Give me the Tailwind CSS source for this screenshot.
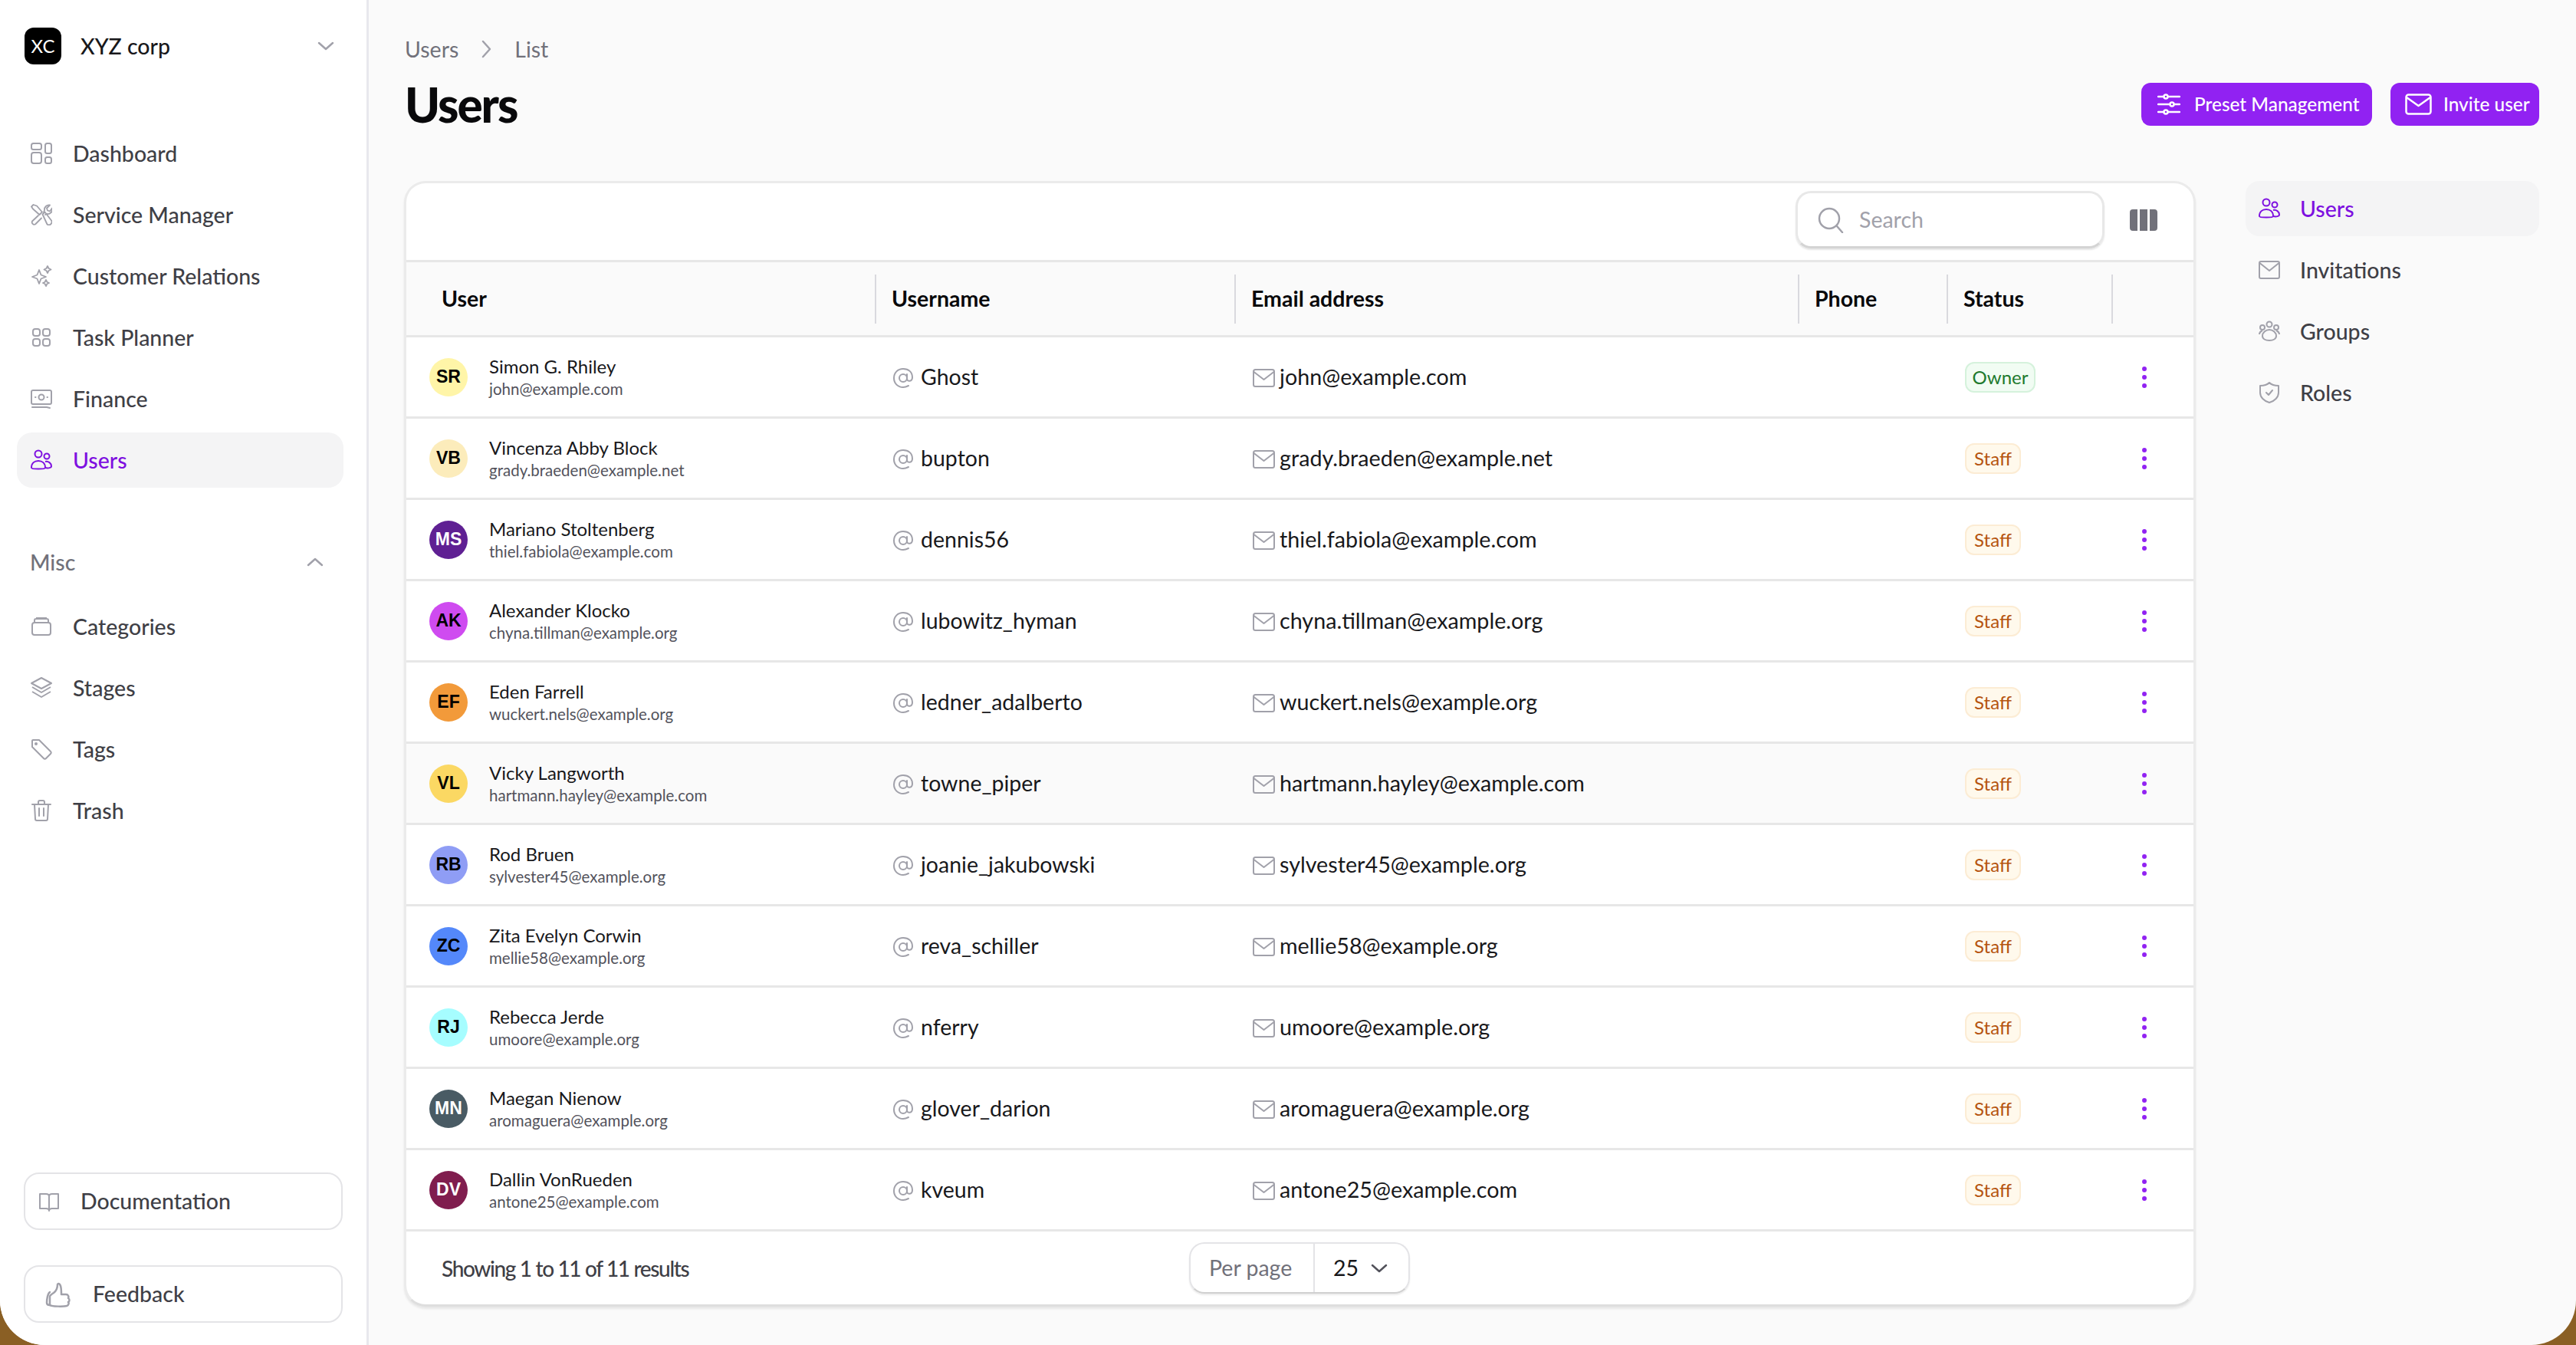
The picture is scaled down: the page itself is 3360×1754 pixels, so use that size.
<!DOCTYPE html>
<html>
<head>
<meta charset="UTF-8">
<title>Users</title>
<script src="https://cdn.jsdelivr.net/npm/@tailwindcss/browser@4"></script>
</head>
<body class="bg-[#8a5f24] font-['Lato',sans-serif]">
<div class="flex w-[3360px] h-[1754px] overflow-hidden rounded-b-[58px] bg-[#fafafa]">

  <!-- Sidebar -->
  <aside class="flex flex-col w-[481px] h-full shrink-0 bg-white border-r-[3px] border-[#e8e8ed] text-[28.5px] text-[#3f3f46] font-medium">
    <div class="flex items-center h-[48px] mt-[36px] ml-[32px] mr-[42px]">
      <div class="flex items-center justify-center w-[48px] h-[48px] rounded-[12px] bg-black text-white text-[24px] font-normal">XC</div>
      <span class="ml-[25px] text-[#18181b]">XYZ corp</span>
      <svg class="ml-auto w-[22px] h-[12px]" viewBox="0 0 22 12" fill="none" stroke="#a1a1aa" stroke-width="2.5" stroke-linecap="round" stroke-linejoin="round"><path d="M2 2l9 8 9-8"/></svg>
    </div>

    <nav class="flex flex-col gap-[8px] mt-[80px] ml-[22px] mr-[30px]">
      <a class="flex items-center gap-[27px] h-[72px] pl-[18px]">
        <svg class="w-[28px] h-[28px]" viewBox="0 0 28 28" fill="none" stroke="#a1a1aa" stroke-width="2"><rect x="1" y="1" width="13" height="8" rx="2.5"/><rect x="1" y="13" width="13" height="14" rx="3"/><rect x="19" y="1" width="8" height="13" rx="2.5"/><rect x="19" y="19" width="8" height="8" rx="2.5"/></svg>
        Dashboard
      </a>
      <a class="flex items-center gap-[27px] h-[72px] pl-[18px]">
        <svg class="w-[28px] h-[28px]" viewBox="0 0 28 28" fill="none" stroke="#a1a1aa" stroke-width="1.8" stroke-linecap="round" stroke-linejoin="round"><path d="M1 3.500L3.500 1 8 2.500 15 10.500 11.500 14 3 6.500z"/><path d="M15.500 13.500L18.500 10.500 27 21.500a3.800 3.800 0 0 1-5.500 5z"/><path d="M10 15L2 22.500a3 3 0 0 0 4 4L14 18.500"/><path d="M17 11l1-3a6 6 0 0 1 7-6.500l-4 4 1 3 3 1 3-4a6 6 0 0 1-7 7.500l-2 1"/></svg>
        Service Manager
      </a>
      <a class="flex items-center gap-[27px] h-[72px] pl-[18px]">
        <svg class="w-[28px] h-[28px]" viewBox="0 0 28 28" fill="none" stroke="#a1a1aa" stroke-width="1.8" stroke-linejoin="round"><path d="M11 6l2.500 6.500L20 15l-6.500 2.500L11 24l-2.500-6.500L2 15l6.500-2.500z"/><path d="M22 1l1.500 3 3 1.500-3 1.500-1.500 3-1.500-3-3-1.500 3-1.500z"/><path d="M20 19l1.300 2.700 2.700 1.300-2.700 1.300-1.300 2.700-1.300-2.700-2.700-1.300 2.700-1.300z"/></svg>
        Customer Relations
      </a>
      <a class="flex items-center gap-[27px] h-[72px] pl-[18px]">
        <svg class="w-[28px] h-[28px]" viewBox="0 0 28 28" fill="none" stroke="#a1a1aa" stroke-width="2"><rect x="3" y="3" width="9" height="9" rx="3"/><rect x="16" y="3" width="9" height="9" rx="3"/><rect x="3" y="16" width="9" height="9" rx="3"/><rect x="16" y="16" width="9" height="9" rx="3"/></svg>
        Task Planner
      </a>
      <a class="flex items-center gap-[27px] h-[72px] pl-[18px]">
        <svg class="w-[28px] h-[28px]" viewBox="0 0 28 28" fill="none" stroke="#a1a1aa" stroke-width="2" stroke-linecap="round"><rect x="1" y="3" width="26" height="18" rx="2"/><circle cx="14" cy="12" r="3.500"/><path d="M6 12h.5M21.500 12h.5M2 25h19l4 1"/></svg>
        Finance
      </a>
      <a class="flex items-center gap-[27px] h-[72px] pl-[18px] rounded-[20px] bg-[#f4f4f5] text-[#7e10e0]">
        <svg class="w-[28px] h-[28px]" viewBox="0 0 28 28" fill="none" stroke="#7e10e0" stroke-width="2"><circle cx="10" cy="6" r="4.500"/><circle cx="21" cy="9" r="3.500"/><path d="M1 24c0-6 4-9 9-9s9 3 9 9c0 2-18 2-18 0z"/><path d="M19 16c4-1 8 2 8 6 0 2-4 3-8 2"/></svg>
        Users
      </a>
    </nav>

    <div class="flex items-center justify-between h-[72px] mt-[61px] ml-[39px] mr-[56px] text-[#71717a]">
      Misc
      <svg class="w-[22px] h-[12px]" viewBox="0 0 22 12" fill="none" stroke="#a1a1aa" stroke-width="2.500" stroke-linecap="round" stroke-linejoin="round"><path d="M2 10l9-8 9 8"/></svg>
    </div>

    <nav class="flex flex-col gap-[8px] mt-[12px] ml-[22px] mr-[30px]">
      <a class="flex items-center gap-[27px] h-[72px] pl-[18px]">
        <svg class="w-[28px] h-[28px]" viewBox="0 0 28 28" fill="none" stroke="#a1a1aa" stroke-width="2"><rect x="2" y="9" width="24" height="16" rx="3"/><path d="M5 9V6a2 2 0 0 1 2-2h14a2 2 0 0 1 2 2v3M8 4V3h12v1"/></svg>
        Categories
      </a>
      <a class="flex items-center gap-[27px] h-[72px] pl-[18px]">
        <svg class="w-[28px] h-[28px]" viewBox="0 0 28 28" fill="none" stroke="#a1a1aa" stroke-width="2" stroke-linejoin="round"><path d="M14 1L27 8 14 15 1 8z"/><path d="M2 13l12 7 12-7M2 19l12 7 12-7"/></svg>
        Stages
      </a>
      <a class="flex items-center gap-[27px] h-[72px] pl-[18px]">
        <svg class="w-[28px] h-[28px]" viewBox="0 0 28 28" fill="none" stroke="#a1a1aa" stroke-width="2" stroke-linejoin="round"><path d="M2 3a1 1 0 0 1 1-1h8l15 15a2 2 0 0 1 0 3l-6 6a2 2 0 0 1-3 0L2 11z"/><circle cx="7" cy="7" r="1"/></svg>
        Tags
      </a>
      <a class="flex items-center gap-[27px] h-[72px] pl-[18px]">
        <svg class="w-[28px] h-[28px]" viewBox="0 0 28 28" fill="none" stroke="#a1a1aa" stroke-width="2" stroke-linecap="round" stroke-linejoin="round"><path d="M2 6h24M5 6l1 19a2 2 0 0 0 2 2h12a2 2 0 0 0 2-2l1-19M10 6V3a2 2 0 0 1 2-2h4a2 2 0 0 1 2 2v3M11 11v10M17 11v10"/></svg>
        Trash
      </a>
    </nav>

    <div class="flex flex-col gap-[46px] mt-auto mb-[29px] ml-[31px] mr-[31px]">
      <a class="flex items-center gap-[28px] h-[75px] pl-[18px] rounded-[20px] border-2 border-[#e4e4e7]">
        <svg class="w-[26px] h-[26px]" viewBox="0 0 26 26" fill="none" stroke="#a1a1aa" stroke-width="2" stroke-linejoin="round"><path d="M1 3h8c2 0 4 1 4 3v19c0-2-2-3-4-3H1zM25 3h-8c-2 0-4 1-4 3v19c0-2 2-3 4-3h8z"/></svg>
        Documentation
      </a>
      <a class="flex items-center gap-[28px] h-[75px] pl-[26px] rounded-[20px] border-2 border-[#e4e4e7]">
        <svg class="w-[34px] h-[34px]" viewBox="0 0 34 34" fill="none" stroke="#a1a1aa" stroke-width="2.500" stroke-linecap="round" stroke-linejoin="round"><path d="M6 31c3 2 18 2 22 1 3-1 3-4 2-5 2-1 2-4 0-5 1-2 0-5-3-5h-6c0-4 0-8-1-11-1-3-3-4-4-2 0 4-1 8-5 11-3 2-5 3-5 5v11z"/><path d="M6 14c-3 2-4 10-4 14 0 2 2 3 4 3"/></svg>
        Feedback
      </a>
    </div>
  </aside>

  <!-- Main -->
  <main class="flex-1 min-w-0 pl-[46px] pr-[48px]">
    <header class="flex items-end justify-between mb-[64px] pt-[44px]">
      <div>
        <div class="flex items-center h-[40px] pl-[1px] text-[28.5px] text-[#71717a]">
          <span>Users</span>
          <svg class="w-[13px] h-[24px] mx-[30px]" viewBox="0 0 13 24" fill="none" stroke="#a1a1aa" stroke-width="2.500" stroke-linecap="round" stroke-linejoin="round"><path d="M2 2l9 10-9 10"/></svg>
          <span>List</span>
        </div>
        <h1 class="h-[72px] mt-[16px] pl-[1px] text-[62px] leading-[72px] font-black tracking-[-2px] text-[#09090b]">Users</h1>
      </div>
      <div class="flex gap-[24px] mb-[8px] text-white text-[24.4px] font-medium">
        <button class="flex items-center gap-[18px] w-[301px] h-[56px] pl-[21px] rounded-[12px] bg-[#9122f2]">
          <svg class="w-[30px] h-[28px]" viewBox="0 0 30 28" fill="none" stroke="#fff" stroke-width="2.500" stroke-linecap="round"><path d="M1 4h7M14 4h15M1 14h15M22 14h7M1 24h7M14 24h15"/><circle cx="11" cy="4" r="2.500"/><circle cx="19" cy="14" r="2.500"/><circle cx="11" cy="24" r="2.500"/></svg>
          Preset Management
        </button>
        <button class="flex items-center gap-[15px] w-[194px] h-[56px] pl-[19px] rounded-[12px] bg-[#9122f2]">
          <svg class="w-[35px] h-[28px]" viewBox="0 0 35 28" fill="none" stroke="#fff" stroke-width="2.500" stroke-linejoin="round"><rect x="1.500" y="1.500" width="32" height="25" rx="3"/><path d="M2 5l15.500 11L33 5"/></svg>
          Invite user
        </button>
      </div>
    </header>

    <div class="flex justify-between items-start">
      <!-- Users table card -->
      <section class="w-[2337px] h-[1468px] overflow-hidden rounded-[28px] border-[3px] border-[#ebebeb] border-b-[#dedede] bg-white shadow-[0_3px_3px_rgba(0,0,0,0.08)]">
        <div class="flex items-center justify-end h-[103px] pb-[5px] pr-[47px] gap-[33px] border-b-[3px] border-[#e7e7e7]">
          <div class="flex items-center gap-[20px] w-[403px] h-[75px] pl-[26px] rounded-[20px] border-[3px] border-[#e8e8e8] border-b-[#d4d4d4] shadow-[0_2px_2px_rgba(0,0,0,0.1)] text-[28.5px] text-[#a1a1aa]">
            <svg class="w-[34px] h-[34px]" viewBox="0 0 34 34" fill="none" stroke="#a1a1aa" stroke-width="2.500" stroke-linecap="round"><circle cx="15" cy="15" r="13"/><path d="M25 25l7 8"/></svg>
            Search
          </div>
          <svg class="w-[36px] h-[28px]" viewBox="0 0 36 28" fill="#71717a"><path d="M4 0h6v28H4a4 4 0 0 1-4-4V4a4 4 0 0 1 4-4zM13 0h10v28H13zM26 0h6a4 4 0 0 1 4 4v20a4 4 0 0 1-4 4h-6z"/></svg>
        </div>

        <table class="w-full table-fixed border-separate border-spacing-0">
          <colgroup>
            <col class="w-[611px]"><col class="w-[469px]"><col class="w-[735px]"><col class="w-[194px]"><col class="w-[215px]"><col>
          </colgroup>
          <thead>
            <tr class="h-[98px] bg-[#fafafa] text-left text-[28.5px] text-[#09090b]">
              <th class="border-b-[3px] border-[#e7e7e7] pl-[46px] font-bold">User</th>
              <th class="border-b-[3px] border-[#e7e7e7] font-bold"><div class="flex items-center h-[64px] pl-[20px] border-l-2 border-[#d9d9de]">Username</div></th>
              <th class="border-b-[3px] border-[#e7e7e7] font-bold"><div class="flex items-center h-[64px] pl-[20px] border-l-2 border-[#d9d9de]">Email address</div></th>
              <th class="border-b-[3px] border-[#e7e7e7] font-bold"><div class="flex items-center h-[64px] pl-[20px] border-l-2 border-[#d9d9de]">Phone</div></th>
              <th class="border-b-[3px] border-[#e7e7e7] font-bold"><div class="flex items-center h-[64px] pl-[20px] border-l-2 border-[#d9d9de]">Status</div></th>
              <th class="border-b-[3px] border-[#e7e7e7]"><div class="h-[64px] border-l-2 border-[#d9d9de]"></div></th>
            </tr>
          </thead>
          <tbody id="rows"></tbody>
        </table>

        <div class="flex items-center h-[95px] pl-[46px] text-[28px] font-medium text-[#3f3f46]">
          <span class="w-[975px] tracking-[-1.350px]">Showing 1 to 11 of 11 results</span>
          <div class="flex items-center w-[288px] h-[67px] rounded-[20px] border-2 border-[#e4e4e7] border-b-[#d0d0d0] shadow-[0_2px_2px_rgba(0,0,0,0.08)] text-[28.5px] font-normal">
            <span class="w-[160px] pl-[24px] text-[#71717a]">Per page</span>
            <span class="flex items-center h-full pl-[24px] gap-[16px] border-l-2 border-[#e4e4e7] text-[#18181b]">25
              <svg class="w-[22px] h-[12px]" viewBox="0 0 22 12" fill="none" stroke="#52525b" stroke-width="2.500" stroke-linecap="round" stroke-linejoin="round"><path d="M2 2l9 8 9-8"/></svg>
            </span>
          </div>
        </div>
      </section>

      <!-- Sub navigation -->
      <nav class="flex flex-col gap-[8px] w-[383px] text-[28.5px] font-medium text-[#3f3f46]">
        <a class="flex items-center gap-[26px] h-[72px] pl-[17px] rounded-[18px] bg-[#f4f4f5] text-[#7e10e0]">
          <svg class="w-[28px] h-[28px]" viewBox="0 0 28 28" fill="none" stroke="#7e10e0" stroke-width="2"><circle cx="10" cy="6" r="4.500"/><circle cx="21" cy="9" r="3.500"/><path d="M1 24c0-6 4-9 9-9s9 3 9 9c0 2-18 2-18 0z"/><path d="M19 16c4-1 8 2 8 6 0 2-4 3-8 2"/></svg>
          Users
        </a>
        <a class="flex items-center gap-[26px] h-[72px] pl-[17px]">
          <svg class="w-[28px] h-[28px]" viewBox="0 0 28 28" fill="none" stroke="#a1a1aa" stroke-width="2" stroke-linejoin="round"><rect x="1" y="3" width="26" height="22" rx="2"/><path d="M1.500 5L14 15 26.500 5"/></svg>
          Invitations
        </a>
        <a class="flex items-center gap-[26px] h-[72px] pl-[17px]">
          <svg class="w-[28px] h-[28px]" viewBox="0 0 28 28" fill="none" stroke="#a1a1aa" stroke-width="2"><circle cx="14" cy="5" r="3.500"/><circle cx="5" cy="9" r="3"/><circle cx="23" cy="9" r="3"/><path d="M14 12c5 0 9 4 9 8s-4 6-9 6-9-2-9-6 4-8 9-8z"/><path d="M5 13c-2 1-4 3-4 5M23 13c2 1 4 3 4 5"/></svg>
          Groups
        </a>
        <a class="flex items-center gap-[26px] h-[72px] pl-[17px]">
          <svg class="w-[28px] h-[28px]" viewBox="0 0 28 28" fill="none" stroke="#a1a1aa" stroke-width="2" stroke-linecap="round" stroke-linejoin="round"><path d="M14 1c3 3 7 4 12 4v9c0 6-5 11-12 13C7 25 2 20 2 14V5c5 0 9-1 12-4z"/><path d="M10 14l3 3 5-6"/></svg>
          Roles
        </a>
      </nav>
    </div>
  </main>
</div>

<script>
  const users = [
    ['SR', '#fff5a8', '#000000', 'Simon G. Rhiley', 'john@example.com', 'Ghost', 'Owner'],
    ['VB', '#fcecbb', '#000000', 'Vincenza Abby Block', 'grady.braeden@example.net', 'bupton', 'Staff'],
    ['MS', '#5f2093', '#ffffff', 'Mariano Stoltenberg', 'thiel.fabiola@example.com', 'dennis56', 'Staff'],
    ['AK', '#cf4bf0', '#000000', 'Alexander Klocko', 'chyna.tillman@example.org', 'lubowitz_hyman', 'Staff'],
    ['EF', '#f29a3a', '#000000', 'Eden Farrell', 'wuckert.nels@example.org', 'ledner_adalberto', 'Staff'],
    ['VL', '#fbd863', '#000000', 'Vicky Langworth', 'hartmann.hayley@example.com', 'towne_piper', 'Staff'],
    ['RB', '#8f9df5', '#000000', 'Rod Bruen', 'sylvester45@example.org', 'joanie_jakubowski', 'Staff'],
    ['ZC', '#5488fa', '#000000', 'Zita Evelyn Corwin', 'mellie58@example.org', 'reva_schiller', 'Staff'],
    ['RJ', '#a6fdff', '#000000', 'Rebecca Jerde', 'umoore@example.org', 'nferry', 'Staff'],
    ['MN', '#495b64', '#ffffff', 'Maegan Nienow', 'aromaguera@example.org', 'glover_darion', 'Staff'],
    ['DV', '#801d4e', '#ffffff', 'Dallin VonRueden', 'antone25@example.com', 'kveum', 'Staff'],
  ];
  const owner = 'w-[92px] border-[#d5f2dc] bg-[#f1fcf3] text-[#217a2e]';
  const staff = 'w-[73px] border-[#fcecd4] bg-[#fff9ec] text-[#b5540f]';

  document.getElementById('rows').innerHTML = users.map(([ini, bg, fg, name, email, login, role], i) => `
    <tr class="h-[106px] ${i === 5 ? 'bg-[#fafafa]' : ''}">
      <td class="border-b-[3px] border-[#e7e7e7] pl-[30px]">
        <div class="flex items-center gap-[28px]">
          <span class="flex items-center justify-center w-[50px] h-[50px] rounded-full font-['Liberation_Sans',sans-serif] text-[23px] font-bold" style="background:${bg};color:${fg}">${ini}</span>
          <div class="flex flex-col">
            <span class="text-[24px] leading-[30px] text-[#18181b]">${name}</span>
            <span class="text-[20.500px] leading-[28px] text-[#52525b]">${email}</span>
          </div>
        </div>
      </td>
      <td class="border-b-[3px] border-[#e7e7e7] pl-[24px]">
        <div class="flex items-center gap-[10px] text-[28.5px] text-[#18181b]">
          <svg class="w-[26px] h-[26px] mt-[3px]" viewBox="0 0 26 26" fill="none" stroke="#a1a1aa" stroke-width="2" stroke-linecap="round"><circle cx="13" cy="13" r="5"/><path d="M18 8v6c0 4 7 4 7-2C25 5 20 1 13 1 6 1 1 6 1 13s5 12 12 12c3 0 5-1 7-2"/></svg>
          ${login}
        </div>
      </td>
      <td class="border-b-[3px] border-[#e7e7e7] pl-[24px]">
        <div class="flex items-center gap-[6px] text-[28.7px] text-[#18181b]">
          <svg class="w-[29px] h-[24px] mt-[3px]" viewBox="0 0 29 24" fill="none" stroke="#a1a1aa" stroke-width="2" stroke-linejoin="round"><rect x="1" y="1" width="27" height="22" rx="2.500"/><path d="M1.500 4L14.500 14 27.500 4"/></svg>
          ${email}
        </div>
      </td>
      <td class="border-b-[3px] border-[#e7e7e7]"></td>
      <td class="border-b-[3px] border-[#e7e7e7] pl-[24px]">
        <span class="flex items-center justify-center h-[40px] rounded-[12px] border-2 text-[24px] ${role === 'Owner' ? owner : staff}">${role}</span>
      </td>
      <td class="border-b-[3px] border-[#e7e7e7] pl-[40px]">
        <div class="flex flex-col gap-[5px]">
          <span class="w-[6px] h-[6px] rounded-full bg-[#9122f2]"></span>
          <span class="w-[6px] h-[6px] rounded-full bg-[#9122f2]"></span>
          <span class="w-[6px] h-[6px] rounded-full bg-[#9122f2]"></span>
        </div>
      </td>
    </tr>`).join('');
</script>
</body>
</html>
